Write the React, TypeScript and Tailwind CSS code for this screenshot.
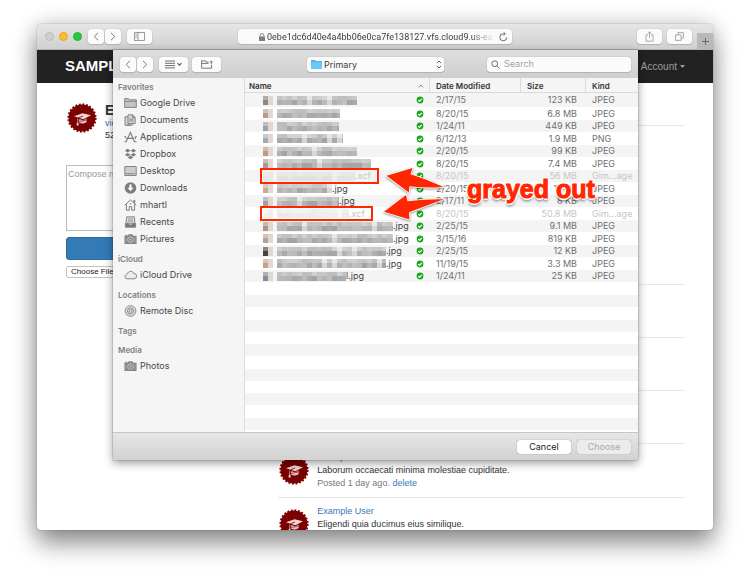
import React from "react";

type FileRow = {
  end: number;
  ext: string;
  date: string;
  size: string;
  kind: string;
  tone: string;
  gray?: boolean;
};

const FILES: FileRow[] = [
  { end: 94, ext: "", date: "2/17/15", size: "123 KB", kind: "JPEG", tone: "#8b7d7b" },
  { end: 77, ext: "", date: "8/20/15", size: "6.8 MB", kind: "JPEG", tone: "#b59484" },
  { end: 76, ext: "", date: "1/24/11", size: "449 KB", kind: "JPEG", tone: "#9a9aa2" },
  { end: 80, ext: "", date: "6/12/13", size: "1.9 MB", kind: "PNG", tone: "#a3a5ae" },
  { end: 94, ext: "", date: "2/20/15", size: "99 KB", kind: "JPEG", tone: "#b8957f" },
  { end: 108, ext: "", date: "8/20/15", size: "7.4 MB", kind: "JPEG", tone: "#a8958c" },
  { end: 92, ext: ".xcf", date: "8/20/15", size: "56 MB", kind: "Gim...age", tone: "#b9b9b9", gray: true },
  { end: 69, ext: ".jpg", date: "2/20/15", size: "12 KB", kind: "JPEG", tone: "#c3a493" },
  { end: 76, ext: ".jpg", date: "2/17/11", size: "8 KB", kind: "JPEG", tone: "#9c9ca4" },
  { end: 86, ext: ".xcf", date: "8/20/15", size: "50.8 MB", kind: "Gim...age", tone: "#c9c9c9", gray: true },
  { end: 130, ext: ".jpg", date: "2/25/15", size: "9.1 MB", kind: "JPEG", tone: "#a88f85" },
  { end: 130, ext: ".jpg", date: "3/15/16", size: "819 KB", kind: "JPEG", tone: "#b59b8d" },
  { end: 123, ext: ".jpg", date: "2/25/15", size: "12 KB", kind: "JPEG", tone: "#3c3838" },
  { end: 123, ext: ".jpg", date: "11/19/15", size: "3.3 MB", kind: "JPEG", tone: "#c19c88" },
  { end: 83, ext: "l.jpg", date: "1/24/11", size: "25 KB", kind: "JPEG", tone: "#7f858f" },
];

const EMPTY_ROWS = Array.from({ length: 12 }, (_, i) => i + FILES.length);

function rowClass(i: number) {
  const stripe = i % 2 === 0 ? "bg-[#f4f4f4]" : "bg-white";
  if (i === 0) return "h-[14px] " + stripe;
  const tall = i < 16 ? i % 2 === 1 : i % 4 === 1;
  return (tall ? "h-[13px] " : "h-[12px] ") + stripe;
}

/* Pixelated file icon and name */
function Mosaic({ row, seed }: { row: FileRow; seed: number }) {
  const cells: React.ReactNode[] = [];
  const noise = (a: number, b: number) => {
    const v = Math.sin(a * 12.9 + b * 78.2 + seed * 37.7) * 43758.5;
    return v - Math.floor(v);
  };
  const fade = row.gray ? 0.25 : 1;
  cells.push(<rect key="i1" x={0} y={0} width={5} height={4} fill={row.tone} opacity={0.6 * fade} />);
  cells.push(<rect key="i2" x={0} y={4} width={5} height={5} fill={row.tone} opacity={0.95 * fade} />);
  cells.push(<rect key="i3" x={5} y={0} width={5} height={9} fill="#e0d3cd" opacity={row.gray ? 0.4 : 0.9} />);
  for (let x = 14, n = 0; x < row.end; x += 5, n++) {
    const gap = n > 3 && noise(n, 5) > 0.86;
    const w = Math.min(5, row.end - x);
    const top = gap ? 232 : Math.round(188 + noise(n, 1) * 24);
    const low = gap ? 214 : Math.round(162 + noise(n, 2) * 30);
    cells.push(<rect key={"t" + n} x={x} y={0} width={w} height={4} fill={`rgb(${top},${top},${top})`} opacity={fade} />);
    cells.push(<rect key={"l" + n} x={x} y={4} width={w} height={5} fill={`rgb(${low},${low},${low})`} opacity={fade} />);
  }
  return (
    <svg width={row.end} height={9} viewBox={`0 0 ${row.end} 9`} shapeRendering="crispEdges" className="shrink-0" aria-hidden="true">
      {cells}
    </svg>
  );
}

function CheckBadge() {
  return (
    <svg width="8" height="8" viewBox="0 0 8 8" className="ml-auto shrink-0" aria-hidden="true">
      <circle cx="4" cy="4" r="3.4" fill="#1fa51f" />
      <path d="M2.3 4.1 3.5 5.3 5.8 2.9" fill="none" stroke="#fff" strokeWidth="1.2" />
    </svg>
  );
}

function Avatar() {
  return (
    <svg width="30" height="30" viewBox="0 0 30 30" className="shrink-0" aria-hidden="true">
      <circle cx="15" cy="15" r="13.4" fill="#7b0000" />
      <circle cx="15" cy="15" r="13.6" fill="none" stroke="#7b0000" strokeWidth="2" strokeDasharray="1.9 1.66" />
      <path d="M7 13.2 15.500 10.300l8.500 1.900-7.600 4z" fill="#f0d6d6" />
      <path d="M11.500 16v3.300c2 1.600 5.200 1.500 8.200-.4v-3.300l-3.200 1.600z" fill="#e4c0c0" />
      <path d="M16 13 11.800 14.600 11.300 22" fill="none" stroke="#7b0000" strokeWidth=".8" />
      <path d="M10.500 15.500v4.500M10 20h1.200l.3 2.200H9.800z" stroke="#e4c0c0" strokeWidth=".6" fill="#e4c0c0" />
      <path d="m12 18.500 8-1.600" stroke="#7b0000" strokeWidth=".6" />
    </svg>
  );
}

const G = "#7c7c7c";

function FolderIcon() {
  return (
    <svg width="13" height="12" viewBox="0 0 13 12" fill="none" stroke={G} aria-hidden="true">
      <path d="M.7 10.4V1.6h3.8l1 1.2h6.8v7.6z" fill="#c4c4c4" strokeWidth=".9" />
      <path d="M.7 4.4h11.6" strokeWidth=".8" />
    </svg>
  );
}
function DocumentsIcon() {
  return (
    <svg width="13" height="12" viewBox="0 0 13 12" fill="#d4d4d4" stroke={G} strokeWidth=".9" aria-hidden="true">
      <path d="M1 2.8h5v8.4H1z" />
      <path d="M4 .8h4.6l2.6 2.4v6.4H4z" />
      <path d="M8.4.9v2.6h2.6M5.5 5.2h4M5.5 7h4" fill="none" />
      <path d="M2.5 11.2h5.8V9.6" fill="none" />
    </svg>
  );
}
function ApplicationsIcon() {
  return (
    <svg width="13" height="12" viewBox="0 0 13 12" fill="none" stroke={G} strokeWidth="1.1" strokeLinecap="round" aria-hidden="true">
      <path d="M6.5 1.2 2.2 10.4M6.3 1.2l4 9M3.2 7.4h6.2" />
      <path d="M.6 5.3c1 .1 1.4.8 1.6 2M12.4 5.6c-1.2 0-1.6.9-1 1.8M10.3 10.4l1.8.4M2.2 10.4l-1.4.5" />
    </svg>
  );
}
function DropboxIcon() {
  return (
    <svg width="13" height="12" viewBox="0 0 13 12" fill={G} aria-hidden="true">
      <path d="m3.6.8 2.9 1.9-2.9 1.9L.8 2.7zM9.4.8l2.8 1.9-2.8 1.9-2.9-1.9zM3.6 4.9l2.9 1.8-2.9 1.9L.8 6.7zM9.4 4.9l2.8 1.8-2.8 1.9-2.9-1.9zM6.5 7.6l2.8 1.9-2.8 1.8-2.8-1.8z" />
    </svg>
  );
}
function DesktopIcon() {
  return (
    <svg width="13" height="12" viewBox="0 0 13 12" fill="none" stroke={G} strokeWidth=".9" aria-hidden="true">
      <path d="M.8 1.5h11.4v9H.8z" fill="#cdcdcd" />
      <path d="M2.2 8.7h8.6" strokeWidth="1.3" strokeDasharray="1.4 .6" />
    </svg>
  );
}
function DownloadsIcon() {
  return (
    <svg width="13" height="12" viewBox="0 0 13 12" aria-hidden="true">
      <circle cx="6.5" cy="6" r="5.8" fill={G} />
      <path d="M5.4 2.6h2.2v3.2h1.9L6.5 9.2 3.5 5.8h1.9z" fill="#fff" />
    </svg>
  );
}
function HomeIcon() {
  return (
    <svg width="13" height="12" viewBox="0 0 13 12" fill="none" stroke={G} strokeWidth="1" aria-hidden="true">
      <path d="M.8 6.2 6.5.9l5.7 5.3M9.8 3.6V1.3h1v3.2" />
      <path d="M2.4 5.3v5.9h2.9V7.6h2.4v3.6h2.9V5.3" />
      <path d="M5.7 4.8h1.6" />
    </svg>
  );
}
function RecentsIcon() {
  return (
    <svg width="13" height="12" viewBox="0 0 13 12" fill="none" stroke={G} strokeWidth=".9" aria-hidden="true">
      <path d="M2.6.8h7.8l.6 7H2z" fill="#dcdcdc" />
      <path d="M1.4 7.6h2.8l.8 1.5h3l.8-1.5h2.8v3.6H1.4z" fill={G} />
      <path d="M4 2.8h5M3.8 4.4h5.4M3.7 6h5.6" strokeWidth=".6" />
    </svg>
  );
}
function CameraIcon() {
  return (
    <svg width="13" height="12" viewBox="0 0 13 12" aria-hidden="true">
      <path d="M.4 2.800h3.300l.8-1.600h4l.8 1.600h3.300v8.200H.4zM1.500 1.700h1.600v1.300H1.500z" fill="#868686" />
      <circle cx="6.500" cy="6.600" r="2.800" fill="none" stroke="#d6d6d6" strokeWidth=".8" />
      <circle cx="6.500" cy="6.600" r="1.100" fill="#bdbdbd" />
      <path d="M1.900 4.200v5.400M11.100 4.200v5.400" stroke="#b5b5b5" strokeWidth=".6" />
    </svg>
  );
}
function CloudIcon() {
  return (
    <svg width="13" height="12" viewBox="0 0 13 12" aria-hidden="true">
      <path d="M3 9.800a2.200 2.200 0 0 1-.5-4.300 2 2 0 0 1 1.700-1.700 2.900 2.900 0 0 1 5.400.6 2.700 2.700 0 0 1 .6 5.400z" fill="#ededed" stroke={G} strokeWidth=".9" />
    </svg>
  );
}
function DiscIcon() {
  return (
    <svg width="13" height="12" viewBox="0 0 13 12" fill="none" stroke={G} aria-hidden="true">
      <circle cx="6.500" cy="6" r="5.400" fill="#dadada" strokeWidth=".8" />
      <circle cx="6.500" cy="6" r="3.200" fill="#c6c6c6" strokeWidth=".6" />
      <circle cx="6.500" cy="6" r="1.300" fill="#f0f0f0" strokeWidth=".6" />
    </svg>
  );
}

const SIDEBAR: { title: string; items: { label: string; Icon: () => React.ReactElement }[] }[] = [
  {
    title: "Favorites",
    items: [
      { label: "Google Drive", Icon: FolderIcon },
      { label: "Documents", Icon: DocumentsIcon },
      { label: "Applications", Icon: ApplicationsIcon },
      { label: "Dropbox", Icon: DropboxIcon },
      { label: "Desktop", Icon: DesktopIcon },
      { label: "Downloads", Icon: DownloadsIcon },
      { label: "mhartl", Icon: HomeIcon },
      { label: "Recents", Icon: RecentsIcon },
      { label: "Pictures", Icon: CameraIcon },
    ],
  },
  { title: "iCloud", items: [{ label: "iCloud Drive", Icon: CloudIcon }] },
  { title: "Locations", items: [{ label: "Remote Disc", Icon: DiscIcon }] },
  { title: "Tags", items: [] },
  { title: "Media", items: [{ label: "Photos", Icon: CameraIcon }] },
];

const BTN = "flex h-[15px] items-center justify-center rounded-[3px] bg-[#fbfbfb] text-[#7a7a7a] shadow-[0_0_1px_rgba(0,0,0,0.35),0_1px_1px_rgba(0,0,0,0.12)]";

function Chevron({ right }: { right?: boolean }) {
  return (
    <svg width="6" height="9" viewBox="0 0 6 9" fill="none" stroke="currentColor" strokeWidth="1" aria-hidden="true">
      <path d={right ? "M1 .8 4.800 4.500 1 8.200" : "M5 .8 1.200 4.500 5 8.200"} />
    </svg>
  );
}

function NavButtons() {
  return (
    <div className="flex gap-px">
      <button aria-label="Back" className={BTN + " w-4"}><Chevron /></button>
      <button aria-label="Forward" className={BTN + " w-4"}><Chevron right /></button>
    </div>
  );
}

function BrowserBar() {
  return (
    <header className="grid h-[26px] shrink-0 grid-cols-[201px_1fr_201px] items-center border-b border-[#b4b4b4] bg-linear-to-b from-[#e6e6e6] to-[#d0d0d0]">
      <div className="flex items-center pl-2">
        <div className="flex gap-[5px]">
          <span className="size-[9px] rounded-full border border-[#bdbdbd] bg-[#cecece]" />
          <span className="size-[9px] rounded-full border border-[#e5a52a] bg-[#fdbc2e]" />
          <span className="size-[9px] rounded-full border border-[#1fb236] bg-[#28c940]" />
        </div>
        <div className="mr-[6px] ml-[6px]"><NavButtons /></div>
        <button aria-label="Show sidebar" className={BTN + " w-[25px]"}>
          <svg width="11" height="9" viewBox="0 0 11 9" fill="none" stroke="#8f8f8f" strokeWidth=".9" aria-hidden="true">
            <path d="M.5.5h10v8H.5zM4 .5v8M1.500 2.300h1.300M1.500 3.900h1.300M1.500 5.500h1.300" />
          </svg>
        </button>
      </div>
      <div className="flex h-[15px] items-center rounded-[3px] bg-[#fbfbfb] pr-1 pl-[21px] shadow-[0_0_1px_rgba(0,0,0,0.35),0_1px_1px_rgba(0,0,0,0.12)]">
        <svg width="6" height="8" viewBox="0 0 6 8" className="mr-[2px] shrink-0" aria-hidden="true">
          <path d="M0 3.500h6V8H0z" fill="#7d7d7d" />
          <path d="M1.200 3.800V2.400a1.800 1.800 0 0 1 3.600 0v1.400" fill="none" stroke="#7d7d7d" strokeWidth=".9" />
        </svg>
        <input
          aria-label="Address"
          readOnly
          value="0ebe1dc6d40e4a4bb06e0ca7fe138127.vfs.cloud9.us-east-"
          className="min-w-0 flex-1 overflow-hidden bg-transparent font-[Roboto,sans-serif] text-[9px] leading-3 text-[#3c3c3c] outline-none [mask-image:linear-gradient(to_right,black_88%,transparent_98%)]"
        />
        <svg width="9" height="10" viewBox="0 0 9 10" fill="none" stroke="#5c5c5c" strokeWidth=".9" aria-hidden="true">
          <path d="M7.800 5.400A3.500 3.500 0 1 1 4.500 1.800h1.300M4.600.2l1.700 1.600-1.700 1.700" />
        </svg>
      </div>
      <div className="flex h-full items-center justify-end">
        <button aria-label="Share" className={BTN + " w-[25px]"}>
          <svg width="9" height="11" viewBox="0 0 9 11" fill="none" stroke="#a0a0a0" strokeWidth=".9" aria-hidden="true">
            <path d="M3 3.800H1v6.400h7V3.800H6M4.500 7V.9M2.700 2.500 4.500.8l1.800 1.700" />
          </svg>
        </button>
        <button aria-label="Tabs" className={BTN + " ml-[5px] w-[25px]"}>
          <svg width="9" height="9" viewBox="0 0 9 9" fill="none" stroke="#a0a0a0" strokeWidth=".9" aria-hidden="true">
            <path d="M.6 2.900h5.500v5.500H.6zM2.900 2.900V.6h5.500v5.500H6.100" />
          </svg>
        </button>
        <button aria-label="New tab" className="ml-[5px] flex h-4 w-4 items-center justify-center self-end bg-[#b9b9b9]">
          <svg width="7" height="7" viewBox="0 0 7 7" stroke="#6a6a6a" strokeWidth="1" aria-hidden="true">
            <path d="M3.500 0v7M0 3.500h7" />
          </svg>
        </button>
      </div>
    </header>
  );
}

function Post({ text, children }: { text: string; children?: React.ReactNode }) {
  return (
    <li className="flex gap-2 border-t border-[#e8e8e8] py-[7px] pl-px">
      <div className="pt-[4px]"><Avatar /></div>
      <div className="leading-[13px]">
        <a href="#user" className="block text-[#337ab7]">Example User</a>
        <p>{text}</p>
        {children}
      </div>
    </li>
  );
}

function SamplePage() {
  return (
    <div className="min-h-0 flex-1 overflow-hidden font-['Liberation_Sans',Arial,sans-serif] text-[9px] text-[#333]">
      <nav className="flex h-[33px] items-center justify-between bg-[#222] px-7">
        <a href="#home" className="text-[15px] font-bold text-white">SAMPLE APP</a>
        <a href="#account" className="flex items-center gap-[3px] text-[10px] text-[#9d9d9d]">
          Account
          <svg width="5" height="3" viewBox="0 0 5 3" fill="currentColor" aria-hidden="true"><path d="M0 0h5L2.500 3z" /></svg>
        </a>
      </nav>
      <div className="grid grid-cols-[1fr_2fr] gap-[10px] px-7">
        <aside className="pt-5">
          <div className="flex gap-2 pl-[2px]">
            <Avatar />
            <div className="leading-3">
              <h1 className="text-[14px] leading-[14px] font-bold">Example User</h1>
              <a href="#profile" className="block text-[#337ab7]">view my profile</a>
              <p>52 microposts</p>
            </div>
          </div>
          <form className="mt-6 flex flex-col pl-px">
            <textarea aria-label="Micropost" placeholder="Compose new micropost..." className="h-[66px] resize-none border border-[#bbb] p-px pt-[2px] leading-3 placeholder:text-[#999]" />
            <button type="button" className="mt-[6px] h-[23px] rounded-[3px] border border-[#2e6da4] bg-[#337ab7] text-white">Post</button>
            <input type="file" aria-label="Picture" className="mt-[5px] leading-3 file:h-3 file:rounded-[2px] file:border file:border-[#c4c4c4] file:bg-white file:px-1 file:text-[8px] file:leading-[10px] file:text-[#222]" />
          </form>
        </aside>
        <ol className="pt-[42px]">
          <li className="h-[159px] border-t border-[#e8e8e8]" />
          <li className="h-[53px] border-t border-[#e8e8e8]" />
          <li className="h-[53px] border-t border-[#e8e8e8]" />
          <li className="h-[53px] border-t border-[#e8e8e8]" />
          <Post text="Laborum occaecati minima molestiae cupiditate.">
            <p className="text-[#777]">Posted 1 day ago. <a href="#delete" className="text-[#337ab7]">delete</a></p>
          </Post>
          <Post text="Eligendi quia ducimus eius similique." />
        </ol>
      </div>
    </div>
  );
}

function DialogToolbar() {
  return (
    <div className="grid h-7 grid-cols-[194px_1fr_194px] items-center bg-linear-to-b from-[#dedede] to-[#cfcfcf]">
      <div className="flex items-center pl-[7px]">
        <NavButtons />
        <button aria-label="View options" className={BTN + " ml-[6px] w-[29px]"}>
          <svg width="18" height="9" viewBox="0 0 18 9" fill="none" stroke="#5f5f5f" aria-hidden="true">
            <path d="M0 1h10M0 3.300h10M0 5.600h10M0 7.900h10" strokeWidth=".9" />
            <path d="m12.500 3.200 2 2 2-2" strokeWidth="1.200" />
          </svg>
        </button>
        <button aria-label="New folder" className={BTN + " ml-1 w-[29px]"}>
          <svg width="12" height="9" viewBox="0 0 12 9" fill="none" stroke="#6a6a6a" strokeWidth=".9" aria-hidden="true">
            <path d="M7.500 2H5L4.200.8H.6v7.400h10V5M.6 3.400h7M10.300 4.300V1M8.900 2.300 10.300.9l1.400 1.400" />
          </svg>
        </button>
      </div>
      <div className="relative">
        <select aria-label="Folder" className="block h-[15px] w-full appearance-none rounded-[3px] bg-[#fbfbfb] pl-[17px] text-[9px] leading-[15px] text-[#3c3c3c] shadow-[0_0_1px_rgba(0,0,0,0.35),0_1px_1px_rgba(0,0,0,0.12)]">
          <option>Primary</option>
        </select>
        <svg width="11" height="9" viewBox="0 0 11 9" className="pointer-events-none absolute top-[3px] left-[4px]" aria-hidden="true">
          <path d="M0 0h4l1 1h6v8H0z" fill="#4fb4e6" />
          <path d="M0 2.200h11V9H0z" fill="#6cc8f5" />
        </svg>
        <svg width="6" height="9" viewBox="0 0 6 9" fill="none" stroke="#5c5c5c" className="pointer-events-none absolute top-[3px] right-[2px]" aria-hidden="true">
          <path d="M.8 3.200 3 1l2.200 2.200M.8 5.800 3 8l2.200-2.200" />
        </svg>
      </div>
      <div className="flex justify-end pr-[7px]">
        <label className={BTN + " w-36 gap-1 px-1"}>
          <svg width="9" height="9" viewBox="0 0 9 9" fill="none" stroke="#6a6a6a" aria-hidden="true">
            <circle cx="3.700" cy="3.700" r="2.900" />
            <path d="m6 6 2.600 2.600" />
          </svg>
          <input aria-label="Search" placeholder="Search" className="min-w-0 flex-1 bg-transparent text-[9px] leading-3 outline-none placeholder:text-[#a3a3a3]" />
        </label>
      </div>
    </div>
  );
}

function FileTable() {
  return (
    <table className="w-full table-fixed border-collapse text-[9px] leading-[12px] text-[#6f6f6f]">
      <colgroup>
        <col />
        <col className="w-[91px]" />
        <col className="w-[65px]" />
        <col className="w-[53px]" />
      </colgroup>
      <thead>
        <tr className="h-[15px] bg-[#f5f5f5] text-left text-[8px] text-[#333] shadow-[inset_0_-1px_0_#d9d9d9]">
          <th scope="col" className="p-0 pl-1 font-semibold">
            <span className="flex items-center justify-between pr-[5px]">
              Name
              <svg width="6" height="4" viewBox="0 0 6 4" fill="none" stroke="#8a8a8a" aria-hidden="true"><path d="M.8 3.400 3 1l2.200 2.400" /></svg>
            </span>
          </th>
          <th scope="col" className="p-0 pl-[7px] font-semibold shadow-[inset_1px_0_0_#dcdcdc]">Date Modified</th>
          <th scope="col" className="p-0 pl-[7px] font-semibold shadow-[inset_1px_0_0_#dcdcdc]">Size</th>
          <th scope="col" className="p-0 pl-[7px] font-semibold shadow-[inset_1px_0_0_#dcdcdc]">Kind</th>
        </tr>
      </thead>
      <tbody>
        {FILES.map((f, i) => (
          <tr key={i} className={rowClass(i) + (f.gray ? " text-[#c6c6c6]" : "")}>
            <td className="p-0 pr-[5px] pl-[18px]">
              <div className={"flex items-center " + (f.gray ? "text-[#c6c6c6]" : "text-[#444]")}>
                <Mosaic row={f} seed={i} />
                <span>{f.ext}</span>
                <CheckBadge />
              </div>
            </td>
            <td className="p-0 pl-[7px]">{f.date}</td>
            <td className="p-0 pr-2 text-right whitespace-nowrap">{f.size}</td>
            <td className="p-0 pl-[7px] whitespace-nowrap">{f.kind}</td>
          </tr>
        ))}
        {EMPTY_ROWS.map((i) => (
          <tr key={i} className={rowClass(i)}><td colSpan={4} className="p-0" /></tr>
        ))}
      </tbody>
    </table>
  );
}

/* Hand-drawn callouts laid over the list */
function Callouts() {
  return (
    <div className="pointer-events-none absolute top-0 left-0 size-full">
      <div className="absolute top-[90px] left-[15px] h-4 w-[119px] border-2 border-[#ff2600]" />
      <div className="absolute top-[128px] left-[15px] h-[15px] w-[113px] border-2 border-[#ff2600]" />
      <svg width="66" height="74" viewBox="380 150 66 74" className="absolute top-[72px] left-[135px] overflow-visible drop-shadow-[0_1px_1px_rgba(0,0,0,0.4)]" aria-hidden="true">
        <g fill="#ff2600" stroke="#fff" strokeWidth="1.600" strokeLinejoin="round" style={{ paintOrder: "stroke" }}>
          <path d="M386.500 175.800 412.500 168 410.500 174.200Q426 179 443.500 187 426 188.500 409.500 186.200L408.800 192.500z" />
          <path d="M384 211.800 406 195 407.500 201.200Q425 199 444 199.300 427 205.500 409 212.300L409.500 219.500z" />
        </g>
      </svg>
      <p className="absolute top-[96px] left-[222px] font-['Liberation_Sans',Arial,sans-serif] text-[25px] leading-[30px] font-bold whitespace-nowrap text-[#ff2600] [-webkit-text-stroke:1px_#ff2600] [text-shadow:2px_0_0_#fff,-2px_0_0_#fff,0_2px_0_#fff,0_-2px_0_#fff,1px_1px_0_#fff,-1px_-1px_0_#fff,0_3px_3px_rgba(0,0,0,0.55)]">
        grayed out
      </p>
    </div>
  );
}

function FileDialog() {
  return (
    <section role="dialog" aria-label="Open file" className="absolute top-[26px] right-[75px] left-[76px] bg-[#f5f5f5] shadow-[0_0_1px_rgba(0,0,0,0.6),0_3px_9px_rgba(0,0,0,0.4)]">
      <DialogToolbar />
      <div className="flex">
        <nav aria-label="Places" className="w-[132px] shrink-0 border-r border-[#dcdcdc] bg-[#f5f5f5] pt-[3px]">
          {SIDEBAR.map((group) => (
            <section key={group.title} className="mb-[6px]">
              <h2 className="pl-[5px] text-[8px] leading-[13px] font-semibold text-[#808080]">{group.title}</h2>
              <ul>
                {group.items.map(({ label, Icon }) => (
                  <li key={label}>
                    <a href="#place" className="flex h-[17px] items-center gap-[3px] pl-[11px] text-[9px] text-[#484848]">
                      <Icon />
                      {label}
                    </a>
                  </li>
                ))}
              </ul>
            </section>
          ))}
        </nav>
        <div className="relative min-w-0 flex-1 bg-white pb-[2px]">
          <FileTable />
          <Callouts />
        </div>
      </div>
      <footer className="flex h-[28px] items-center justify-end gap-[6px] border-t border-[#c6c6c6] bg-linear-to-b from-[#e6e6e6] to-[#d2d2d2] pr-[7px] text-[9px]">
        <button className="h-[14px] w-[54px] rounded-[3px] bg-white leading-[14px] text-[#222] shadow-[0_0_1px_rgba(0,0,0,0.6)]">Cancel</button>
        <button disabled className="h-[14px] w-[54px] rounded-[3px] bg-[#ececec] leading-[14px] text-[#aaa] shadow-[0_0_1px_rgba(0,0,0,0.45)]">Choose</button>
      </footer>
    </section>
  );
}

export default function App() {
  return (
    <div className="flex h-screen flex-col overflow-hidden bg-white px-[37px] pt-6 pb-[49px] font-['Inter',Roboto,sans-serif]">
      <main className="relative flex min-h-0 flex-1 flex-col rounded-[4px] bg-white shadow-[0_0_1px_rgba(0,0,0,0.6),0_14px_24px_rgba(0,0,0,0.4),0_0_22px_rgba(0,0,0,0.2)]">
        <div className="flex min-h-0 flex-1 flex-col overflow-hidden rounded-[4px]">
          <BrowserBar />
          <SamplePage />
        </div>
        <FileDialog />
      </main>
    </div>
  );
}
